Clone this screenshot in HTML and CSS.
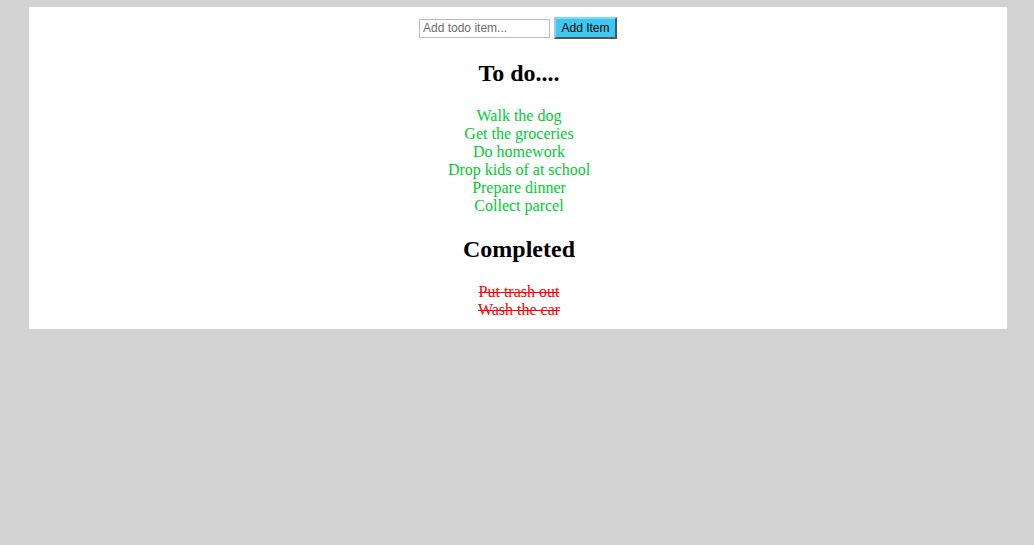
FILE: index.html
```html
<!DOCTYPE html>
<html>
<head>
<meta charset="utf-8">
<title>Todo</title>
<link rel="stylesheet" href="styles.css">
</head>
<body>
<div class="app">
  <form class="add-form" onsubmit="return false;">
    <input class="todo-input" type="text" placeholder="Add todo item...">
    <button class="add-btn" type="submit">Add Item</button>
  </form>
  <h2 class="heading">To do....</h2>
  <ul class="list todo-list">
    <li>Walk the dog</li>
    <li>Get the groceries</li>
    <li>Do homework</li>
    <li>Drop kids of at school</li>
    <li>Prepare dinner</li>
    <li>Collect parcel</li>
  </ul>
  <h2 class="heading">Completed</h2>
  <ul class="list done-list">
    <li>Put trash out</li>
    <li>Wash the car</li>
  </ul>
</div>
</body>
</html>
```

FILE: styles.css
```css
html, body {
  margin: 0;
  padding: 0;
  background: #d3d3d3;
  height: 100%;
}
body {
  padding-top: 7px;
  box-sizing: border-box;
  font-family: "Liberation Serif", "Times New Roman", serif;
}
.app {
  width: 976px;
  margin-left: 29px;
  background: #fff;
  padding: 10px 0 10px 2px;
  text-align: center;
}
.add-form {
  margin: 0 0 0 -2px;
  display: flex;
  justify-content: center;
  align-items: center;
  gap: 4px;
  height: 22px;
}
.todo-input {
  width: 131px;
  height: 19px;
  box-sizing: border-box;
  border: 1px solid #bdbdbd;
  padding: 1px 3px;
  font-family: "Liberation Sans", Arial, sans-serif;
  font-size: 12px;
  color: #333;
  outline: none;
}
.todo-input::placeholder {
  color: #6d6d6d;
}
.add-btn {
  width: 63px;
  height: 22px;
  box-sizing: border-box;
  background: #3cc8f0;
  border: 2px solid;
  border-color: #7fd8f2 #555 #555 #7fd8f2;
  padding: 0;
  font-family: "Liberation Sans", Arial, sans-serif;
  font-size: 12px;
  color: #000;
}
.heading {
  font-size: 24px;
  font-weight: bold;
  margin: 20px 0;
  line-height: 28px;
  color: #000;
}
.list {
  list-style: none;
  margin: 0;
  padding: 0;
  font-size: 16px;
  line-height: 18px;
}
.todo-list {
  color: #00cc33;
}
.done-list {
  color: #ff0000;
  text-decoration: line-through;
}
```
